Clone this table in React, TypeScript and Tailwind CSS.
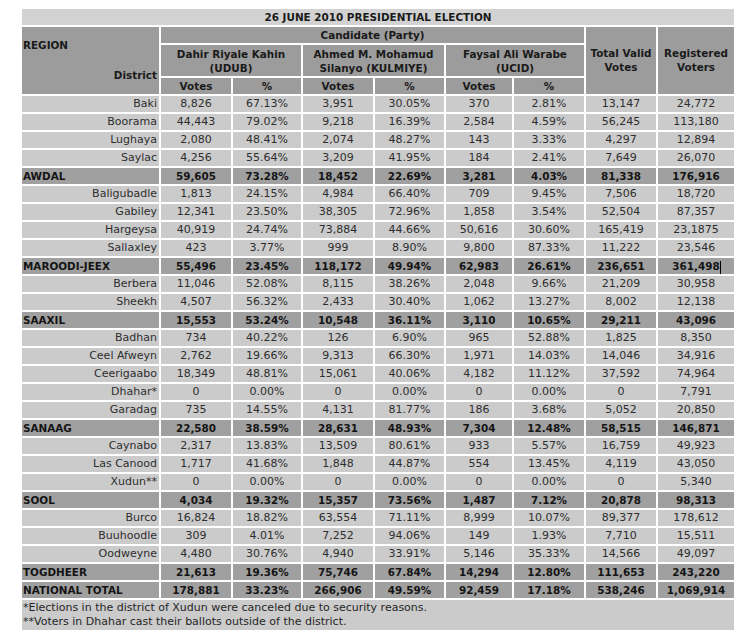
import React from "react";

type Row = {
  name: string;
  values: string[];
  region?: boolean;
};

const rows: Row[] = [
  { name: "Baki", values: ["8,826", "67.13%", "3,951", "30.05%", "370", "2.81%", "13,147", "24,772"] },
  { name: "Boorama", values: ["44,443", "79.02%", "9,218", "16.39%", "2,584", "4.59%", "56,245", "113,180"] },
  { name: "Lughaya", values: ["2,080", "48.41%", "2,074", "48.27%", "143", "3.33%", "4,297", "12,894"] },
  { name: "Saylac", values: ["4,256", "55.64%", "3,209", "41.95%", "184", "2.41%", "7,649", "26,070"] },
  { name: "AWDAL", region: true, values: ["59,605", "73.28%", "18,452", "22.69%", "3,281", "4.03%", "81,338", "176,916"] },
  { name: "Baligubadle", values: ["1,813", "24.15%", "4,984", "66.40%", "709", "9.45%", "7,506", "18,720"] },
  { name: "Gabiley", values: ["12,341", "23.50%", "38,305", "72.96%", "1,858", "3.54%", "52,504", "87,357"] },
  { name: "Hargeysa", values: ["40,919", "24.74%", "73,884", "44.66%", "50,616", "30.60%", "165,419", "23,1875"] },
  { name: "Sallaxley", values: ["423", "3.77%", "999", "8.90%", "9,800", "87.33%", "11,222", "23,546"] },
  { name: "MAROODI-JEEX", region: true, values: ["55,496", "23.45%", "118,172", "49.94%", "62,983", "26.61%", "236,651", "361,498"] },
  { name: "Berbera", values: ["11,046", "52.08%", "8,115", "38.26%", "2,048", "9.66%", "21,209", "30,958"] },
  { name: "Sheekh", values: ["4,507", "56.32%", "2,433", "30.40%", "1,062", "13.27%", "8,002", "12,138"] },
  { name: "SAAXIL", region: true, values: ["15,553", "53.24%", "10,548", "36.11%", "3,110", "10.65%", "29,211", "43,096"] },
  { name: "Badhan", values: ["734", "40.22%", "126", "6.90%", "965", "52.88%", "1,825", "8,350"] },
  { name: "Ceel Afweyn", values: ["2,762", "19.66%", "9,313", "66.30%", "1,971", "14.03%", "14,046", "34,916"] },
  { name: "Ceerigaabo", values: ["18,349", "48.81%", "15,061", "40.06%", "4,182", "11.12%", "37,592", "74,964"] },
  { name: "Dhahar*", values: ["0", "0.00%", "0", "0.00%", "0", "0.00%", "0", "7,791"] },
  { name: "Garadag", values: ["735", "14.55%", "4,131", "81.77%", "186", "3.68%", "5,052", "20,850"] },
  { name: "SANAAG", region: true, values: ["22,580", "38.59%", "28,631", "48.93%", "7,304", "12.48%", "58,515", "146,871"] },
  { name: "Caynabo", values: ["2,317", "13.83%", "13,509", "80.61%", "933", "5.57%", "16,759", "49,923"] },
  { name: "Las Canood", values: ["1,717", "41.68%", "1,848", "44.87%", "554", "13.45%", "4,119", "43,050"] },
  { name: "Xudun**", values: ["0", "0.00%", "0", "0.00%", "0", "0.00%", "0", "5,340"] },
  { name: "SOOL", region: true, values: ["4,034", "19.32%", "15,357", "73.56%", "1,487", "7.12%", "20,878", "98,313"] },
  { name: "Burco", values: ["16,824", "18.82%", "63,554", "71.11%", "8,999", "10.07%", "89,377", "178,612"] },
  { name: "Buuhoodle", values: ["309", "4.01%", "7,252", "94.06%", "149", "1.93%", "7,710", "15,511"] },
  { name: "Oodweyne", values: ["4,480", "30.76%", "4,940", "33.91%", "5,146", "35.33%", "14,566", "49,097"] },
  { name: "TOGDHEER", region: true, values: ["21,613", "19.36%", "75,746", "67.84%", "14,294", "12.80%", "111,653", "243,220"] },
  { name: "NATIONAL TOTAL", region: true, values: ["178,881", "33.23%", "266,906", "49.59%", "92,459", "17.18%", "538,246", "1,069,914"] },
];

const colWidths = [137, 70, 68, 70, 69, 66, 70, 70, 76];

// bold text in the original is narrower than regular 11px, so it runs a touch smaller
const headCell = "bg-[#9c9c9c] font-bold text-[10.4px] text-[#1a1a1a] text-center leading-[14px] p-0";

export default function App() {
  return (
    <div className="bg-white w-[748px] h-[640px] pt-[7px] pl-[20px] font-['DejaVu_Sans',Verdana,sans-serif] text-[11px]">
      <table className="table-fixed border-separate border-spacing-[2px] w-[716px]">
        <colgroup>
          {colWidths.map((w, i) => (
            <col key={i} style={{ width: w }} />
          ))}
        </colgroup>
        <thead>
          <tr>
            <td colSpan={9} className="bg-[#d2d2d2] h-[16px] p-0 text-center font-bold text-[10.4px] leading-[16px] text-[#1a1a1a]">
              26 JUNE 2010 PRESIDENTIAL ELECTION
            </td>
          </tr>
          <tr>
            <td rowSpan={3} className="bg-[#9c9c9c] p-0 align-top font-bold text-[10.4px] text-[#1a1a1a] leading-[14px]">
              <div className="pl-[1px] pt-[11px]">REGION</div>
              <div className="pr-[2px] pt-[16px] text-right">District</div>
            </td>
            <td colSpan={6} className={`${headCell} h-[16px]`}>
              Candidate (Party)
            </td>
            <td rowSpan={3} className={`${headCell} align-top pt-[19px]`}>
              Total Valid
              <br />
              Votes
            </td>
            <td rowSpan={3} className={`${headCell} align-top pt-[19px]`}>
              Registered
              <br />
              Voters
            </td>
          </tr>
          <tr>
            <td colSpan={2} className={`${headCell} h-[31px]`}>
              Dahir Riyale Kahin
              <br />
              (UDUB)
            </td>
            <td colSpan={2} className={`${headCell} h-[31px]`}>
              Ahmed M. Mohamud
              <br />
              Silanyo (KULMIYE)
            </td>
            <td colSpan={2} className={`${headCell} h-[31px]`}>
              Faysal Ali Warabe
              <br />
              (UCID)
            </td>
          </tr>
          <tr>
            <td className={`${headCell} h-[16px]`}>Votes</td>
            <td className={`${headCell} h-[16px]`}>%</td>
            <td className={`${headCell} h-[16px]`}>Votes</td>
            <td className={`${headCell} h-[16px]`}>%</td>
            <td className={`${headCell} h-[16px]`}>Votes</td>
            <td className={`${headCell} h-[16px]`}>%</td>
          </tr>
        </thead>
        <tbody>
          {rows.map((row) => (
            <tr key={row.name}>
              {row.region ? (
                <td className="bg-[#a0a0a0] h-[16px] p-0 pl-[1px] leading-[16px] font-bold text-[10.4px] text-[#141414] whitespace-nowrap">
                  {row.name}
                </td>
              ) : (
                <td className="bg-[#cbcbcb] h-[16px] p-0 pr-[2px] leading-[16px] text-right text-[#2e2e2e] whitespace-nowrap">
                  {row.name}
                </td>
              )}
              {row.values.map((v, i) => (
                <td
                  key={i}
                  className={
                    row.region
                      ? "bg-[#a0a0a0] h-[16px] p-0 leading-[16px] text-center font-bold text-[10.4px] text-[#141414] whitespace-nowrap"
                      : "bg-[#cbcbcb] h-[16px] p-0 leading-[16px] text-center text-[#2e2e2e] whitespace-nowrap"
                  }
                >
                  {v}
                  {row.name === "MAROODI-JEEX" && i === 7 && (
                    <span className="inline-block w-[1px] h-[13px] bg-black align-middle -mr-[1px]" />
                  )}
                </td>
              ))}
            </tr>
          ))}
          <tr>
            <td colSpan={9} className="bg-[#cbcbcb] h-[30px] p-0 pl-[1px] pt-[1px] align-top leading-[14px] text-[#262626]">
              *Elections in the district of Xudun were canceled due to security reasons.
              <br />
              **Voters in Dhahar cast their ballots outside of the district.
            </td>
          </tr>
        </tbody>
      </table>
    </div>
  );
}
